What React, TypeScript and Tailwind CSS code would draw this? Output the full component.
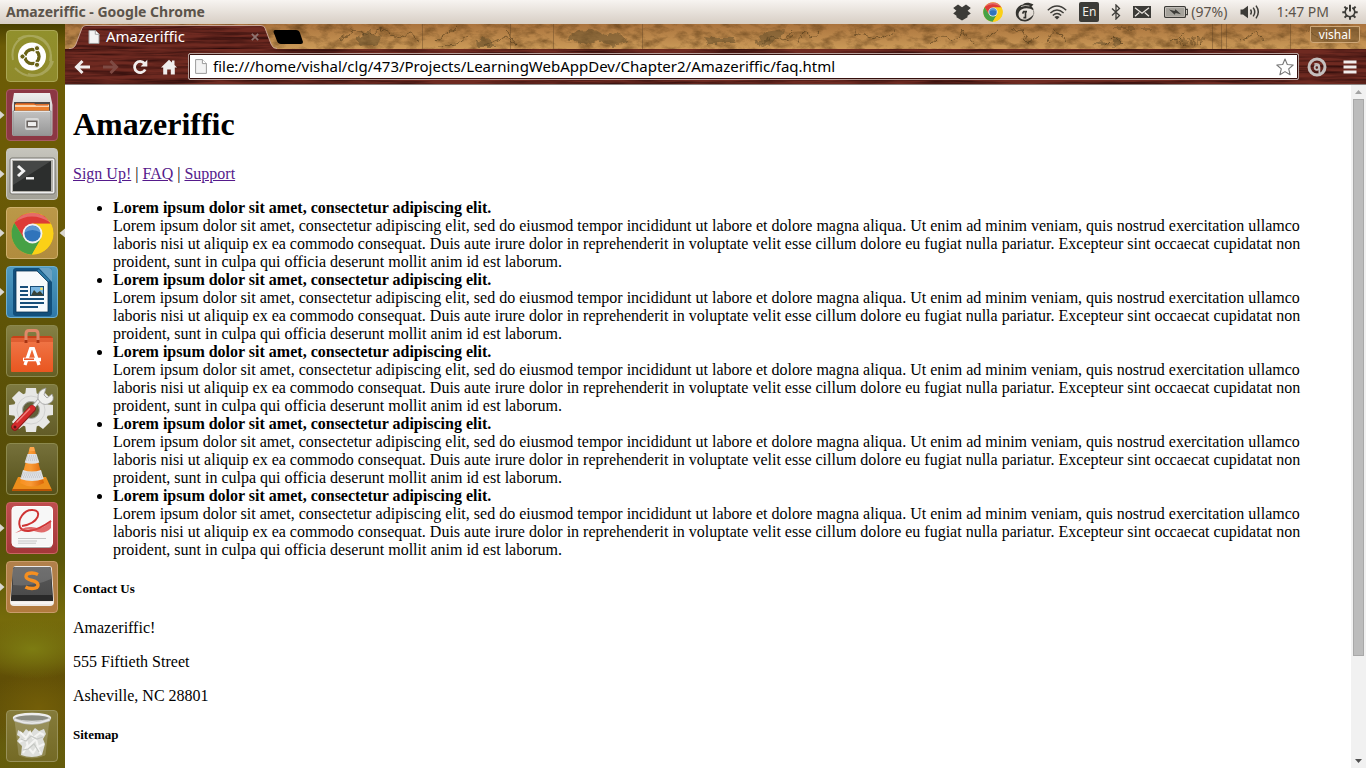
import React from "react";

const LOREM =
  "Lorem ipsum dolor sit amet, consectetur adipiscing elit, sed do eiusmod tempor incididunt ut labore et dolore magna aliqua. Ut enim ad minim veniam, quis nostrud exercitation ullamco laboris nisi ut aliquip ex ea commodo consequat. Duis aute irure dolor in reprehenderit in voluptate velit esse cillum dolore eu fugiat nulla pariatur. Excepteur sint occaecat cupidatat non proident, sunt in culpa qui officia deserunt mollit anim id est laborum.";

/* ---------- Chrome logo, shared by panel and launcher ---------- */

function ChromeLogo({ className }: { className: string }) {
  return (
    <svg viewBox="0 0 42 42" className={className} aria-hidden="true">
      <circle cx="21" cy="21" r="20.5" fill="#f8cf12" />
      <path d="M3.2 10.8A20.5 20.5 0 0 1 38.8 11.5L21 11.5L12.5 26Z" fill="#dd3b36" />
      <path d="M3.2 10.8A20.5 20.5 0 0 0 20.5 41.5L29.5 26L12.8 26Z" fill="#46a145" />
      <path d="M38.8 11.5A20.5 20.5 0 0 1 20.5 41.5L29.6 25.5L29 15L21 11.5Z" fill="#fbd017" />
      <path d="M3.8 10A20.5 20.5 0 0 1 38 10Q20 -1 3.8 10Z" fill="#fff" opacity=".25" />
      <circle cx="21" cy="21" r="9.7" fill="#f2f2f2" />
      <circle cx="21" cy="21" r="7.9" fill="#3074bb" />
      <path d="M13.2 20A7.9 7.9 0 0 1 28.8 20Q21 15 13.2 20Z" fill="#73a6da" opacity=".7" />
    </svg>
  );
}

/* ---------- Top panel ---------- */

function DropboxIcon() {
  return (
    <svg viewBox="0 0 18 17" className="h-[17px] w-[18px]" fill="#3c3b37" aria-hidden="true">
      <path d="M5 0.5L9 3.2L13 .5L17.8 4L14.6 6.8L17.8 9.6L14.5 11.8V13.2L9 16.6L3.5 13.2V11.8L.2 9.6L3.4 6.8L.2 4Z" />
    </svg>
  );
}

function GlobeIcon() {
  return (
    <svg viewBox="0 0 20 20" className="size-5" aria-hidden="true">
      <path d="M9 1.5C12 .2 15 1 18.5 2.5L16.5 4.5C18 5.6 18.6 7 18.6 8.5C15 6 10 5.6 6.5 7.6C3.5 9.5 2.8 12.5 4.2 15C5.4 17.2 8.4 18.2 11.5 17.4C14.5 16.7 17 14.6 18.9 11.8C18 16 14.8 19.4 10.2 19.6C4.8 19.8 .6 15.8 .8 10.6C1 6.4 4 3 8 2.4Z" fill="#34332f" />
      <path d="M6 4.6Q10 2.6 14.5 4" fill="none" stroke="#d9d4cd" strokeWidth=".8" />
      <path d="M12 9.6H8.6L7.6 11.6M10.5 10V15.6H8.4" fill="none" stroke="#34332f" strokeWidth="1.6" />
      <path d="M18.4 8.5Q18.9 10 18.7 12" fill="none" stroke="#77736c" strokeWidth=".8" />
    </svg>
  );
}

function WifiIcon() {
  return (
    <svg viewBox="0 0 20 15" className="h-[15px] w-5" fill="none" stroke="#3c3b37" strokeWidth="1.4" aria-hidden="true">
      <path d="M.8 5.3Q10-3.2 19.2 5.3M3.4 8Q10 2 16.6 8M5.8 10.4Q10 6.4 14.2 10.4" />
      <path d="M7.4 12Q10 9.8 12.6 12L10 14.6Z" fill="#3c3b37" stroke="none" />
    </svg>
  );
}

function BluetoothIcon() {
  return (
    <svg viewBox="0 0 10 16" className="h-4 w-[10px]" fill="none" stroke="#3c3b37" strokeWidth="1.3" aria-hidden="true">
      <path d="M1 4.5L8.5 11.5L5 15V1L8.5 4.5L1 11.5" />
    </svg>
  );
}

function MailIcon() {
  return (
    <svg viewBox="0 0 18 12" className="h-3 w-[18px]" aria-hidden="true">
      <rect width="18" height="12" fill="#3c3b37" />
      <path d="M2 1.8L9 7.3L16 1.8M2 10.3L6.3 6.5M16 10.3L11.7 6.5" fill="none" stroke="#eee9e3" strokeWidth="1.2" />
    </svg>
  );
}

function BatteryIcon() {
  return (
    <svg viewBox="0 0 24 12" className="h-3 w-6" aria-hidden="true">
      <rect x=".6" y=".6" width="20.8" height="10.8" rx="1" fill="none" stroke="#3c3b37" strokeWidth="1.2" />
      <rect x="2" y="2" width="18" height="8" fill="#a5a29b" />
      <path d="M22 3.4H23.4V8.6H22" fill="none" stroke="#3c3b37" strokeWidth="1.1" />
      <path d="M5 3.6L10.6 5L11.4 3.2L17 8.2L11.6 7L10.8 8.8Z" fill="#3c3b37" />
    </svg>
  );
}

function SoundIcon() {
  return (
    <svg viewBox="0 0 21 16" className="h-4 w-[21px]" aria-hidden="true">
      <path d="M.5 5.6H3L8 1.8V14.2L3 10.4H.5Z" fill="#3c3b37" />
      <path d="M10.5 5.5Q12.2 8 10.5 10.5M13.2 3.6Q16.3 8 13.2 12.4M16 1.6Q20.6 8 16 14.4" fill="none" stroke="#3c3b37" strokeWidth="1.5" />
    </svg>
  );
}

function PowerGearIcon() {
  return (
    <svg viewBox="0 0 16 16" className="size-4" fill="none" stroke="#3c3b37" aria-hidden="true">
      <path d="M5.7 3.8A4.8 4.8 0 1 0 10.3 3.8" strokeWidth="1.6" />
      <path d="M8 .8V7.5" strokeWidth="2" />
      <path d="M2.4 2.6L4.5 4.7M13.6 2.6L11.5 4.7M.3 8.2H3M13 8.2H15.7M2.6 13.6L4.7 11.5M13.4 13.6L11.3 11.5M8 13V15.8" strokeWidth="2" />
    </svg>
  );
}

function TopPanel() {
  return (
    <header className="flex h-6 shrink-0 items-center bg-linear-to-b from-[#f7f4f1] to-[#d7cec4] pr-2 pl-[6px] font-['Noto_Sans','Open_Sans',sans-serif] text-sm text-[#5c544b]">
      <h1 className="flex-1 text-sm font-bold">Amazeriffic - Google Chrome</h1>
      <div className="flex items-center gap-[13px]">
        <div className="flex items-center gap-3">
          <DropboxIcon />
          <ChromeLogo className="size-5" />
          <GlobeIcon />
          <WifiIcon />
          <span className="flex size-5 items-center justify-center rounded-[2px] bg-[#3c3b37] text-xs text-[#f2eee9]">En</span>
          <BluetoothIcon />
          <MailIcon />
        </div>
        <span className="flex items-center gap-[3px]">
          <BatteryIcon />
          <span>(97%)</span>
        </span>
        <SoundIcon />
        <time className="pl-[2px]">1:47 PM</time>
        <PowerGearIcon />
      </div>
    </header>
  );
}

/* ---------- Launcher icons, each on a 52 x 52 field ---------- */

function DashIcon() {
  return (
    <>
      <path d="M7 30C4 15 14 5 27 6C40 7 47 18 44 31M12 9C25 1 43 9 45 25C47 39 34 48 22 44M9 38C22 52 43 46 47 31" fill="none" stroke="#fff" strokeOpacity=".22" strokeWidth="2" />
      <circle cx="26" cy="26.5" r="14" fill="#fff" />
      <circle cx="26" cy="26.5" r="7" fill="none" stroke="#6a6317" strokeWidth="3.4" />
      <path d="M26 26.5L14 26.5M26 26.5L32 36.9M26 26.5L32 16.1" stroke="#fff" strokeWidth="1.4" />
      <circle cx="26" cy="26.5" r="5.3" fill="#fff" />
      <g fill="#6a6317" stroke="#fff" strokeWidth="1">
        <circle cx="16.5" cy="26.5" r="2.6" />
        <circle cx="31" cy="18.2" r="2.6" />
        <circle cx="31" cy="34.8" r="2.6" />
      </g>
    </>
  );
}

function FilesIcon() {
  return (
    <>
      <path d="M8 4H44L46.5 16V45Q46.5 47 44 47H8Q6 47 6 45V16Z" fill="url(#silver)" />
      <path d="M8 13H44V23H8Z" fill="#514b49" />
      <path d="M9 15H43V23H9Z" fill="#ec7e2d" />
      <path d="M9 17H43" stroke="#fff0db" strokeWidth="1.4" />
      <path d="M10 14.6H28L30 16H42" fill="none" stroke="#cc5c25" />
      <path d="M7 22H45V45Q45 46.5 43 46.5H9Q7 46.5 7 45Z" fill="url(#steel)" stroke="#8e8e8e" strokeWidth=".8" />
      <path d="M8 22.5H44" stroke="#e4e4e4" />
      <rect x="19" y="29" width="14" height="12" rx="2" fill="#d7d7d7" />
      <rect x="21.2" y="32.3" width="9.6" height="5.5" fill="#eee" stroke="#66605d" strokeWidth="1.5" />
    </>
  );
}

function TerminalIcon() {
  return (
    <>
      <rect x="4" y="10" width="45" height="36" rx="2" fill="#eee" stroke="#77756f" />
      <rect x="6" y="12" width="41" height="32" fill="#b1afa9" />
      <rect x="7" y="13" width="38" height="30" fill="#2c2e2d" />
      <path d="M7 13H45L7 37Z" fill="#fff" opacity=".12" />
      <path d="M12 18L17.5 23L12 28" fill="none" stroke="#f4f4f4" strokeWidth="3" />
      <path d="M20 30.3H28" stroke="#f4f4f4" strokeWidth="2.4" />
    </>
  );
}

function WriterIcon() {
  return (
    <>
      <rect x="7" y="2" width="39" height="48" rx="3" fill="#124f7b" />
      <path d="M33 2H43Q46 2 46 5V16Z" fill="#6aa2c4" />
      <path d="M10 5H31L42 16V46H10Z" fill="#f7fafc" stroke="#0b3657" strokeWidth=".8" />
      <path d="M32 4L43 15" stroke="#2d7aa6" strokeWidth="2" />
      <path d="M14 21H22M14 25H22M14 29H22M14 33H38M14 37H38M14 41H32" stroke="#174e79" strokeWidth="2" />
      <rect x="24.5" y="20.5" width="13" height="9" fill="#79b6e1" stroke="#174e79" />
      <path d="M25 29.5L28 24L31 27L34 25L38 29.5Z" fill="#384237" />
      <circle cx="35.5" cy="22.8" r="1.4" fill="#ffe05c" />
    </>
  );
}

function SoftwareIcon() {
  return (
    <>
      <path d="M5 13H47L45 11H7Z" fill="#c64218" />
      <path d="M5 13H47V46Q47 47 46 47H6Q5 47 5 46Z" fill="url(#orange)" />
      <path d="M5 13H47V17H5Z" fill="#ce481e" opacity=".5" />
      <path d="M20 17V9Q20 5.5 23 5.5H29Q32 5.5 32 9V17" fill="none" stroke="#e08868" strokeWidth="3" />
      <path d="M20 15V18M32 15V18" stroke="#a83413" strokeWidth="3" />
      <path d="M19 40L24.6 23.5H27.4L33 40" fill="none" stroke="#fff" strokeWidth="3.2" />
      <path d="M17 34.5H35" stroke="#fff" strokeWidth="3.6" />
      <path d="M18 34.2H28" stroke="#eb592d" strokeWidth="1.6" />
    </>
  );
}

function SettingsIcon() {
  return (
    <>
      <g fill="#e7e7e5">
        {[0, 45, 90, 135, 180, 225, 270, 315].map((a) => (
          <path key={a} d="M20 4H30L31 12H19Z" transform={`rotate(${a} 25 26)`} />
        ))}
      </g>
      <circle cx="25" cy="26" r="13" fill="none" stroke="#e7e7e5" strokeWidth="9" />
      <circle cx="25" cy="26" r="14" fill="none" stroke="#d2d2d1" strokeWidth="1" />
      <circle cx="25" cy="26" r="8.5" fill="#625f39" stroke="#aaa" />
      <path d="M23 28L34 15" stroke="#aaa" strokeWidth="4" />
      <path d="M24 27L35 14" stroke="#efefef" strokeWidth="2.5" />
      <path d="M32 15Q31 6 40 4L38 11L41 14L46 10Q50 17 42 20Q36 22 32 15Z" fill="#efefed" stroke="#999" strokeWidth=".8" />
      <path d="M9 43L26 25" stroke="#8d1b1a" strokeWidth="7.5" strokeLinecap="round" />
      <path d="M9 42.5L26 24.5" stroke="#d42b2c" strokeWidth="6" strokeLinecap="round" />
      <path d="M10.5 38.5L24 24.5" stroke="#ef8580" strokeWidth="1.3" />
      <circle cx="9" cy="43" r="1.5" fill="#5e1715" />
    </>
  );
}

function VlcIcon() {
  return (
    <>
      <path d="M12 34H40L46 47H6Z" fill="#ed8e1b" />
      <path d="M6 46H46V48H6Z" fill="#b95405" />
      <path d="M24 4H28L38 40Q26 47 14 40Z" fill="url(#cone)" />
      <path d="M21.5 11H30.5L33.3 19.5Q26 22 18.7 19.5Z" fill="#dfe1e4" />
      <path d="M17 27Q26 30 35 27L37.7 36Q26 40 14.3 36Z" fill="#dfe1e4" />
      <path d="M21 13H31M20.5 15H31.5M20 17H32M16.5 30H35.5M16 32H36M15 34H37" stroke="#aeb3ba" strokeWidth=".8" strokeDasharray="1 1" />
      <path d="M24 4H28L28.8 8H23.1Z" fill="#ffa64b" />
    </>
  );
}

function ReaderIcon() {
  return (
    <>
      <rect x="8" y="7" width="38" height="39" rx="3" fill="#aaa" />
      <rect x="6" y="4.5" width="40.5" height="40" rx="3.5" fill="#f7f7f7" stroke="#fff" />
      <path d="M16 24C34 21 36 8 27 8C18 7 11 18 14 25C17 31 28 31 45 19" fill="none" stroke="#cf3434" strokeWidth="2" />
      <path d="M9 31C16 28 18 23 31 26Q39 27 45 18V26Q39 33 28 29C20 26 16 29 9 31Z" fill="#d94747" opacity=".8" />
      <path d="M12 36.5H40M12 39H31M12 41.2H30" stroke="#c5c5c5" />
    </>
  );
}

function SublimeIcon() {
  return (
    <>
      <path d="M7 8Q7 5 10 5H43Q46 5 46 8L48 41Q48 45 44 45H8Q4 45 4 41Z" fill="#eee9e5" />
      <path d="M9 6H43Q45 6 45 8L47 37V40H5V37L7 8Q7 6 9 6Z" fill="#292929" />
      <path d="M9 6H43Q45 6 45 8L46 34H6L7 8Q7 6 9 6Z" fill="url(#dark)" />
      <path d="M9 6H43Q45 6 45 8V18Q28 26 7 24V8Z" fill="#fff" opacity=".14" />
      <path d="M32 13.5Q29 12 26 12Q20 12 20 15.5Q20 18 26 19.5Q32 21 32 24Q32 27.5 26 27.5Q22 27.5 19.5 26" fill="none" stroke="#f58f20" strokeWidth="3.4" />
      <path d="M5 42H47" stroke="#fff" />
    </>
  );
}

function TrashIcon() {
  return (
    <>
      <path d="M9 10L13 45Q26 51 39 45L43 10Z" fill="#e9e9df" opacity=".22" stroke="#fff" strokeWidth=".7" />
      <path d="M12 20L17 23L20 19L25 23L29 18L33 21L38 19L40 24L37 29L39 34L36 45Q26 49 15 45L16 36L11 31L14 27L11 25Z" fill="#dedfdc" />
      <path d="M14 22L20 28L24 22L27 28L34 23L38 25M13 32L20 29L22 37L30 29L32 37L38 34M17 43L21 36L27 43L31 37L35 44" fill="none" stroke="#f4f4f2" strokeWidth="2" />
      <path d="M15 29L20 31L25 26L31 29L37 27M17 40L22 39L28 34L33 42" fill="none" stroke="#c6c8c4" strokeWidth="1.2" />
      <ellipse cx="26" cy="8" rx="18" ry="4" fill="#8c8d83" stroke="#eee" strokeWidth="2.4" />
      <path d="M8 8V11Q26 18 44 11V8Q26 16 8 8Z" fill="#e8e8e8" stroke="#a8a8a4" strokeWidth=".5" />
    </>
  );
}

type LauncherEntry = {
  label: string;
  tile: string;
  icon?: () => React.ReactElement;
  running?: boolean;
  active?: boolean;
};

const APPS: LauncherEntry[] = [
  { label: "Dash home", tile: "bg-linear-to-b from-[#91902c] to-[#8f8a2b] border-[#aaa654]", icon: DashIcon },
  { label: "Files", tile: "bg-[#8c3744] border-[#a85a63]", icon: FilesIcon, running: true },
  { label: "Terminal", tile: "bg-linear-to-b from-[#c6c5bd] to-[#a3a197] border-[#c9c7be]", icon: TerminalIcon, running: true },
  { label: "Google Chrome", tile: "bg-linear-to-b from-[#bb9848] to-[#b18c3e] border-[#ceb06c]", running: true, active: true },
  { label: "LibreOffice Writer", tile: "bg-linear-to-b from-[#4f9ac0] to-[#2f79a8] border-[#72b0cd]", icon: WriterIcon, running: true },
  { label: "Software Center", tile: "bg-linear-to-b from-[#858044] to-[#655f25] border-[#8c894e]", icon: SoftwareIcon },
  { label: "System Settings", tile: "bg-linear-to-b from-[#7d7940] to-[#625c27] border-[#8c894e]", icon: SettingsIcon },
  { label: "VLC media player", tile: "bg-linear-to-b from-[#76713b] to-[#565119] border-[#8c894e]", icon: VlcIcon },
  { label: "Document Reader", tile: "bg-linear-to-b from-[#bf4c4e] to-[#a43739] border-[#c96563]", icon: ReaderIcon, running: true },
  { label: "Sublime Text", tile: "bg-linear-to-b from-[#b1804b] to-[#b17a3d] border-[#c99c6b]", icon: SublimeIcon, running: true },
];

function LauncherItem({ label, tile, icon: Icon, running, active }: LauncherEntry) {
  return (
    <li className="flex items-center">
      <svg viewBox="0 0 6 10" className="h-[10px] w-[6px]" aria-hidden="true">
        {running && <path d="M0 1L4.5 5L0 9Z" fill="#d9d7d0" />}
      </svg>
      <button type="button" aria-label={label} className={`flex size-[52px] items-center justify-center rounded-[4px] border ${tile}`}>
        {Icon ? (
          <svg viewBox="1 1 50 50" className="size-[50px]" aria-hidden="true">
            <Icon />
          </svg>
        ) : (
          <ChromeLogo className="size-[43px]" />
        )}
      </button>
      <svg viewBox="0 0 7 10" className="h-[10px] w-[7px]" aria-hidden="true">
        {active && <path d="M7 .5L1.5 5L7 9.5Z" fill="#dad7cf" />}
      </svg>
    </li>
  );
}

function Launcher() {
  return (
    <nav aria-label="Launcher" className="flex w-[65px] shrink-0 flex-col justify-between bg-[radial-gradient(ellipse_60px_30px_at_50%_84%,#7d7c12_0%,transparent_100%),radial-gradient(ellipse_50px_40px_at_60%_92%,#735e08_0%,transparent_100%),radial-gradient(ellipse_80px_30px_at_40%_98%,#66600c_0%,transparent_100%),linear-gradient(to_bottom,#483f00_0%,#6c5c06_3%,#6c5b06_20%,#5f5407_40%,#564d08_60%,#5b5609_72%,#766b0b_80%,#604e06_88%,#64590c_100%)] pt-[6px] pb-[6px]">
      <svg className="absolute size-0" aria-hidden="true">
        <defs>
          <linearGradient id="silver" x2="0" y2="1">
            <stop stopColor="#eee" />
            <stop offset="1" stopColor="#aaa" />
          </linearGradient>
          <linearGradient id="steel" x2="0" y2="1">
            <stop stopColor="#c2c2c2" />
            <stop offset="1" stopColor="#969696" />
          </linearGradient>
          <linearGradient id="orange" x2="0" y2="1">
            <stop stopColor="#f07749" />
            <stop offset="1" stopColor="#e95620" />
          </linearGradient>
          <linearGradient id="cone">
            <stop stopColor="#f89120" />
            <stop offset=".45" stopColor="#f99a35" />
            <stop offset="1" stopColor="#db6406" />
          </linearGradient>
          <linearGradient id="dark" x2="0" y2="1">
            <stop stopColor="#595959" />
            <stop offset="1" stopColor="#4b4b4b" />
          </linearGradient>
        </defs>
      </svg>
      <ul className="flex flex-col gap-[7px]">
        {APPS.map((app) => (
          <LauncherItem key={app.label} {...app} />
        ))}
      </ul>
      <ul>
        <LauncherItem label="Trash" tile="border-[#98915a] bg-linear-to-b from-[#857b3a] to-[#746a25]" icon={TrashIcon} />
      </ul>
    </nav>
  );
}

/* ---------- Browser theme textures ---------- */

function MapTexture() {
  return (
    <svg className="absolute inset-0 size-full" aria-hidden="true">
      <defs>
        <filter id="parchment" x="0" y="0" width="100%" height="100%" colorInterpolationFilters="sRGB">
          <feTurbulence type="fractalNoise" baseFrequency="0.07 0.12" numOctaves="5" seed="7" />
          <feColorMatrix values="0 0 0 0 .38  0 0 0 0 .25  0 0 0 0 .1  1.5 0 0 0 -.62" />
        </filter>
        <filter id="ink" x="-5%" y="-20%" width="110%" height="140%" colorInterpolationFilters="sRGB">
          <feTurbulence type="fractalNoise" baseFrequency="0.13" numOctaves="3" seed="11" />
          <feDisplacementMap in="SourceGraphic" scale="9" xChannelSelector="R" yChannelSelector="G" />
        </filter>
        <linearGradient id="sand" x2="0" y2="1">
          <stop stopColor="#aa733d" />
          <stop offset="1" stopColor="#cb9a58" />
        </linearGradient>
      </defs>
      <rect width="100%" height="100%" fill="url(#sand)" />
      <rect width="100%" height="100%" filter="url(#parchment)" />
      <path d="M422.5 0V25M510.5 0V25M553.5 0V25M642.5 0V25M1212.5 0V25M1221.5 0V25M1226.5 0V25M1290.5 0V25" transform="translate(-65 0)" stroke="#5c4222" strokeOpacity=".4" />
      <g filter="url(#ink)">
        <g fill="none" stroke="#4a3518" strokeOpacity=".6" strokeWidth="1">
          <path d="M275 16L290 6L304 12L318 4L332 13L346 8L352 18M372 18L384 8L392 3M375 22L391 20L402 11M420 22L440 12L452 20L440 5" />
          <path d="M695 22Q705 8 713 14T727 8M732 20L740 6L746 14L754 7M790 8L810 14L830 6M865 20Q874 8 882 14T898 7L907 18M920 15L935 6M947 8L957 6L961 18L975 12M982 20L988 6L1003 17M1040 22L1050 12L1058 20M1103 18L1119 9M1175 18L1190 9M1191 7L1200 18M1240 6L1262 18L1280 9" />
          <path d="M1047 5H1070M1076 5H1088M1110 14V20M1115 20V14L1120 20V14M1124 14V20M1128 20V14H1132M1133 20V14L1138 20V14" />
        </g>
        <g fill="#5e4a28" fillOpacity=".5">
          <path d="M502 14L512 6L528 5L540 12L552 9L565 18L548 22L532 16L518 22L508 17Z" />
          <path d="M640 12L650 14L668 14L674 20H642Z" />
          <path d="M410 20L419 12L426 17L432 23H413ZM1047 22L1053 12L1058 21ZM1028 20L1038 16L1044 22Z" />
          <path d="M690 20L700 8L720 5L712 16L698 23ZM290 14L305 8L318 12L310 20L296 22Z" />
        </g>
      </g>
    </svg>
  );
}

function WoodTexture() {
  return (
    <svg className="absolute inset-0 size-full" aria-hidden="true">
      <defs>
        <filter id="grain" x="0" y="0" width="100%" height="100%" colorInterpolationFilters="sRGB">
          <feTurbulence type="fractalNoise" baseFrequency="0.014 0.3" numOctaves="4" seed="4" />
          <feColorMatrix values="0 0 0 0 .12  0 0 0 0 .02  0 0 0 0 .02  1.6 0 0 0 -.58" />
        </filter>
      </defs>
      <rect width="100%" height="100%" fill="#6f2a21" />
      <rect width="100%" height="100%" filter="url(#grain)" />
    </svg>
  );
}

/* ---------- Browser chrome ---------- */

function PageGlyph({ className }: { className: string }) {
  return (
    <svg viewBox="0 0 12 15" className={className} aria-hidden="true">
      <path d="M.6 .6H7.4L11.4 4.6V14.4H.6Z" fill="#f3f3f3" stroke="#9b9b9b" strokeWidth="1" />
      <path d="M7.4 .6V4.6H11.4" fill="#fff" stroke="#9b9b9b" strokeWidth="1" />
    </svg>
  );
}

function TabStrip() {
  return (
    <div className="relative h-[25px] overflow-hidden">
      <MapTexture />
      <div className="relative flex h-full items-start justify-between pr-[6px]">
        <div className="flex h-full">
          <div className="relative flex h-full w-[212px] items-center pr-[18px] pl-[23px] text-white">
            <svg viewBox="0 0 212 25" className="absolute inset-0 size-full" aria-hidden="true">
              <defs>
                <clipPath id="tab-shape">
                  <path d="M4 25V24.5Q9 25 11 20L17 4Q18 1.5 21 1.5H196Q199 1.5 200 4L206 20Q208 25 212 24.5V25Z" />
                </clipPath>
              </defs>
              <g clipPath="url(#tab-shape)">
                <rect width="212" height="25" fill="#6f2a21" />
                <rect width="212" height="25" filter="url(#grain)" />
              </g>
              <path d="M4 24.5Q9 25 11 20L17 4Q18 1.5 21 1.5H196Q199 1.5 200 4L206 20Q208 25 212 24.5" fill="none" stroke="#c9a596" strokeWidth="1" />
            </svg>
            <PageGlyph className="relative h-[14px] w-3" />
            <span className="relative ml-[6px] flex-1 text-[15px]">Amazeriffic</span>
            <button type="button" aria-label="Close tab" className="relative">
              <svg viewBox="0 0 8 8" className="size-2" aria-hidden="true">
                <path d="M.8 .8L7.2 7.2M7.2 .8L.8 7.2" stroke="#8f7470" strokeWidth="1.8" />
              </svg>
            </button>
          </div>
          <button type="button" aria-label="New tab" className="-ml-1 self-center">
            <svg viewBox="0 0 30 14" className="h-[14px] w-[30px]" aria-hidden="true">
              <path d="M2 0H23Q26 0 27 3L30 12Q30 14 28 14H8Q5 14 4 11L.5 2Q.5 0 2 0Z" fill="#000" />
            </svg>
          </button>
        </div>
        <button type="button" className="mt-[2px] h-[17px] rounded-b-[3px] border border-[#cfa878] bg-[#7a5a30]/60 px-2 font-['Noto_Sans',sans-serif] text-xs leading-[15px] text-white">
          vishal
        </button>
      </div>
    </div>
  );
}

function Toolbar() {
  return (
    <div className="relative h-9 border-b border-[#8c8583]">
      <WoodTexture />
      <div className="relative flex h-full items-center pr-[9px] pl-[9px]">
        <div className="flex items-center gap-[13px]">
          <button type="button" aria-label="Back">
            <svg viewBox="0 0 16 16" className="size-4" aria-hidden="true">
              <path d="M8.5 2L2.5 8L8.5 14M3 8H16" fill="none" stroke="#f1eeed" strokeWidth="3" />
            </svg>
          </button>
          <button type="button" aria-label="Forward" disabled>
            <svg viewBox="0 0 16 16" className="size-4" aria-hidden="true">
              <path d="M7.5 2L13.5 8L7.5 14M13 8H0" fill="none" stroke="#7e4a43" strokeWidth="3" />
            </svg>
          </button>
          <button type="button" aria-label="Reload">
            <svg viewBox="0 0 16 16" className="size-4" aria-hidden="true">
              <path d="M12.5 4.5A5.6 5.6 0 1 0 13.2 10.5" fill="none" stroke="#f1eeed" strokeWidth="2.8" />
              <path d="M15.3 .8V7.5H8.6Z" fill="#f1eeed" />
            </svg>
          </button>
          <button type="button" aria-label="Home">
            <svg viewBox="0 0 16 16" className="size-4" aria-hidden="true">
              <path d="M8 .8L11 3.6V1.5H13.5V6L16 8.6H13.8V15.5H9.8V10.5H6.2V15.5H2.2V8.6H0Z" fill="#f1eeed" />
            </svg>
          </button>
        </div>
        <div className="ml-[11px] flex h-[27px] flex-1 items-center rounded-[2px] border border-[#b7a19c] bg-white pr-[4px] pl-[6px] shadow-[inset_0_0_0_1px_#35100d]">
          <PageGlyph className="h-[15px] w-3" />
          <input
            type="text"
            aria-label="Address"
            defaultValue="file:///home/vishal/clg/473/Projects/LearningWebAppDev/Chapter2/Amazeriffic/faq.html"
            className="ml-[6px] h-[22px] min-w-0 flex-1 bg-transparent text-[15px] text-black outline-none"
          />
          <button type="button" aria-label="Bookmark this page">
            <svg viewBox="0 0 18 18" className="size-[18px]" aria-hidden="true">
              <path d="M9 1L11.3 6.5L17.2 7L12.7 10.9L14.1 16.7L9 13.6L3.9 16.7L5.3 10.9L.8 7L6.7 6.5Z" fill="#fff" stroke="#777" strokeWidth="1.1" strokeLinejoin="round" />
            </svg>
          </button>
        </div>
        <button type="button" aria-label="Extension" className="ml-2">
          <svg viewBox="0 0 20 20" className="size-5" aria-hidden="true">
            <circle cx="10" cy="10" r="8" fill="none" stroke="#c4bfbe" strokeWidth="3" />
            <circle cx="9.8" cy="10.6" r="2.2" fill="none" stroke="#c4bfbe" strokeWidth="1.8" />
            <path d="M7.4 7.2Q12.4 6 12.4 10V16" fill="none" stroke="#c4bfbe" strokeWidth="1.8" />
          </svg>
        </button>
        <button type="button" aria-label="Menu" className="ml-4">
          <svg viewBox="0 0 14 14" className="size-[14px]" aria-hidden="true">
            <path d="M.5 2H13.5M.5 7H13.5M.5 12H13.5" stroke="#f0eceb" strokeWidth="3.2" />
          </svg>
        </button>
      </div>
    </div>
  );
}

/* ---------- Web page ---------- */

function FaqPage() {
  return (
    <main className="min-w-0 flex-1 overflow-hidden px-2 pt-[21px] font-['Liberation_Serif',serif] text-base leading-[18px] text-black">
      <h1 className="text-[32px] leading-9 font-bold">Amazeriffic</h1>
      <nav className="mt-[23px]">
        <a href="#signup" className="text-[#551a8b] underline">Sign Up!</a>
        {" | "}
        <a href="#faq" className="text-[#551a8b] underline">FAQ</a>
        {" | "}
        <a href="#support" className="text-[#551a8b] underline">Support</a>
      </nav>
      <ul className="mt-4 list-disc pl-10">
        {[1, 2, 3, 4, 5].map((n) => (
          <li key={n}>
            <strong className="block font-bold">Lorem ipsum dolor sit amet, consectetur adipiscing elit.</strong>
            {LOREM}
          </li>
        ))}
      </ul>
      <h5 className="mt-[22px] text-[13px] leading-[15px] font-bold">Contact Us</h5>
      <div className="mt-[23px] flex flex-col gap-4">
        <p>Amazeriffic!</p>
        <p>555 Fiftieth Street</p>
        <p>Asheville, NC 28801</p>
      </div>
      <h5 className="mt-[22px] text-[13px] leading-[15px] font-bold">Sitemap</h5>
    </main>
  );
}

function Scrollbar() {
  return (
    <div className="flex w-[15px] shrink-0 flex-col items-center bg-[#f1f1f1]" aria-hidden="true">
      <div className="flex h-[14px] items-center">
        <svg viewBox="0 0 7 4" className="h-1 w-[7px]">
          <path d="M0 4L3.5 0L7 4Z" fill="#a3a3a3" />
        </svg>
      </div>
      <div className="flex w-[11px] flex-1 flex-col">
        <div className="h-[85%] border border-[#a8a8a8] bg-[#bcbcbc]" />
      </div>
      <div className="flex h-[14px] items-center">
        <svg viewBox="0 0 7 4" className="h-1 w-[7px]">
          <path d="M0 0L3.5 4L7 0Z" fill="#505050" />
        </svg>
      </div>
    </div>
  );
}

export default function App() {
  return (
    <div className="flex h-screen flex-col overflow-hidden bg-white">
      <TopPanel />
      <div className="flex min-h-0 flex-1">
        <Launcher />
        <div className="flex min-w-0 flex-1 flex-col font-['Noto_Sans','Open_Sans',sans-serif]">
          <TabStrip />
          <Toolbar />
          <div className="flex min-h-0 flex-1">
            <FaqPage />
            <Scrollbar />
          </div>
        </div>
      </div>
    </div>
  );
}
